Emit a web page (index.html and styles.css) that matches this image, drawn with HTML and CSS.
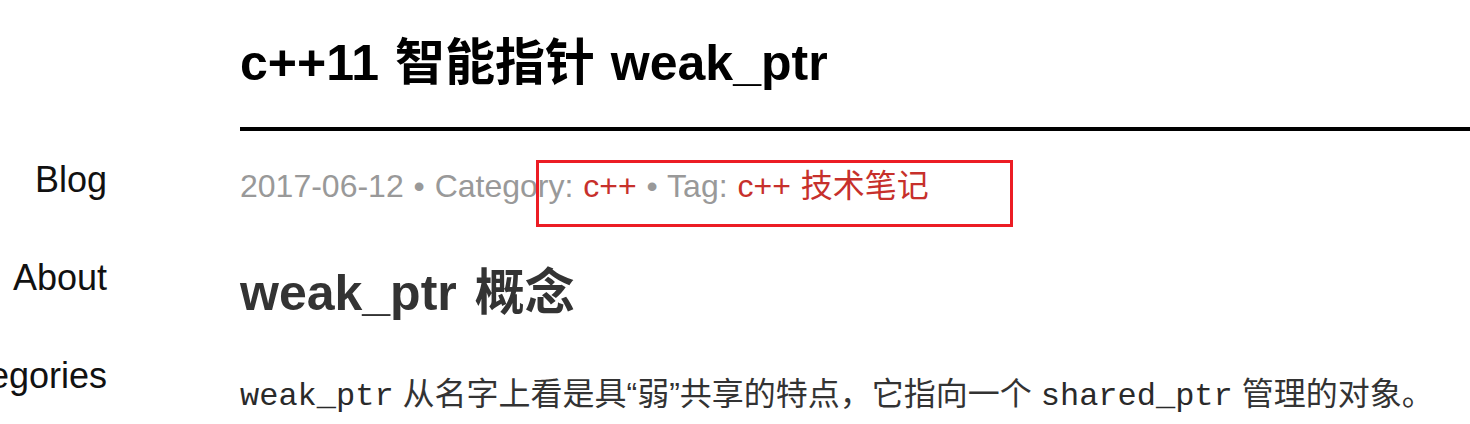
FILE: index.html
```html
<!DOCTYPE html>
<html lang="zh-CN">
<head>
<meta charset="utf-8">
<title>c++11 智能指针 weak_ptr</title>
<link rel="stylesheet" href="styles.css">
</head>
<body>
<div class="page">
  <nav class="sidebar">
    <a class="nav-link" href="#">Blog</a>
    <a class="nav-link" href="#">About</a>
    <a class="nav-link" href="#">Categories</a>
  </nav>
  <main class="content">
    <h1 class="title">c++11 智能指针 weak_ptr</h1>
    <div class="meta">2017-06-12 • Category: <a class="meta-link" href="#">c++</a> • Tag: <a class="meta-link" href="#">c++</a> <a class="meta-link" href="#">技术笔记</a></div>
    <h2 class="section">weak_ptr 概念</h2>
    <p class="para"><code class="code">weak_ptr</code> 从名字上看是具“弱”共享的特点，它指向一个 <code class="code">shared_ptr</code> 管理的对象。</p>
  </main>
</div>
<div class="highlight-box"></div>
</body>
</html>
```
FILE: styles.css
```css
html, body {
  margin: 0;
  padding: 0;
  background: #fff;
  overflow: hidden;
}
body {
  position: relative;
  width: 1470px;
  height: 424px;
  font-family: "Liberation Sans", "Noto Sans CJK SC", sans-serif;
}
.page {
  display: grid;
  grid-template-columns: 107px 1fr;
  column-gap: 133px;
}
.sidebar {
  display: flex;
  flex-direction: column;
  align-items: flex-end;
  gap: 58px;
  padding-top: 160px;
  min-width: 0;
}
.nav-link {
  font-size: 36px;
  line-height: 40px;
  color: #111;
  text-decoration: none;
  white-space: nowrap;
}
.content {
  min-width: 0;
  padding-top: 33px;
}
.title {
  margin: 0;
  font-size: 50px;
  line-height: 60px;
  font-weight: bold;
  color: #000;
  padding-bottom: 34px;
  border-bottom: 4px solid #000;
  white-space: nowrap;
  word-spacing: 2px;
}
.title-cjk,
.section-cjk {
  letter-spacing: 1px;
}
.meta {
  margin-top: 35px;
  font-size: 32px;
  line-height: 40px;
  color: #999;
  white-space: nowrap;
  word-spacing: 1px;
}
.meta-link {
  color: #c7302b;
  text-decoration: none;
}
.section {
  margin: 57px 0 0;
  font-size: 50px;
  line-height: 60px;
  font-weight: bold;
  color: #333;
  white-space: nowrap;
  word-spacing: 4px;
}
.para {
  margin: 51px 0 0;
  font-size: 32px;
  line-height: 40px;
  color: #333;
  white-space: nowrap;
}
.code {
  font-family: "Liberation Mono", monospace;
  font-size: 32px;
  line-height: 1;
  color: #2a2a2a;
}
.highlight-box {
  position: absolute;
  left: 536px;
  top: 160px;
  width: 471px;
  height: 61px;
  border: 3px solid #ec1c24;
}
```
